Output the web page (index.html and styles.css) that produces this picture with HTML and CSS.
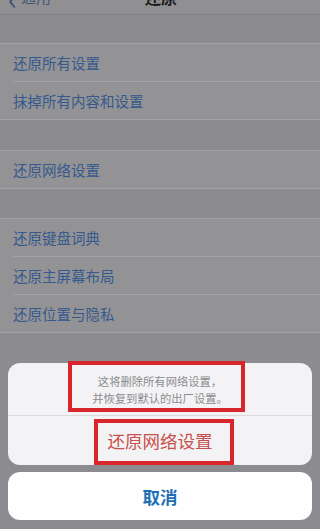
FILE: index.html
```html
<!DOCTYPE html>
<html lang="zh">
<head>
<meta charset="utf-8">
<link rel="stylesheet" href="styles.css">
</head>
<body>
<div class="screen">
  <div class="nav">
    <div class="back"><span class="chev">&#x2039;</span>通用</div>
    <div class="title">还原</div>
  </div>
  <div class="group g1">
    <div class="row">还原所有设置</div>
    <div class="row">抹掉所有内容和设置</div>
  </div>
  <div class="group g2">
    <div class="row">还原网络设置</div>
  </div>
  <div class="group g3">
    <div class="row">还原键盘词典</div>
    <div class="row">还原主屏幕布局</div>
    <div class="row">还原位置与隐私</div>
  </div>
  <div class="sheet">
    <div class="card main">
      <div class="msg">这将删除所有网络设置，<br>并恢复到默认的出厂设置。</div>
      <div class="action danger">还原网络设置</div>
      <div class="mark mark1"></div>
      <div class="mark mark2"></div>
    </div>
    <div class="card cancel">
      <div class="action cancel-text">取消</div>
    </div>
  </div>
</div>
</body>
</html>
```
FILE: styles.css
```css
* { box-sizing: border-box; margin: 0; padding: 0; }
html, body { width: 320px; height: 529px; overflow: hidden; }
body {
  background: #8c8c90;
  font-family: "Noto Sans CJK SC", "Noto Sans", sans-serif;
}
.screen {
  width: 320px;
  height: 529px;
  display: flex;
  flex-direction: column;
  position: relative;
}
.nav {
  height: 15px;
  background: #909093;
  border-bottom: 1px solid #808084;
  overflow: hidden;
  position: relative;
}
.back {
  position: absolute;
  left: 8px;
  bottom: 8px;
  font-size: 15px;
  line-height: 18px;
  color: #3e5578;
  display: flex;
  align-items: flex-end;
}
.chev { font-size: 30px; line-height: 18px; margin-right: 4px; }
.title {
  position: absolute;
  left: 145px;
  bottom: 8px;
  font-size: 16px;
  line-height: 18px;
  font-weight: 600;
  color: #1b1b1d;
}
.group {
  background: #939396;
  border-top: 1px solid #a2a2a5;
  border-bottom: 1px solid #a2a2a5;
}
.g1 { margin-top: 28px; }
.g2 { margin-top: 30px; }
.g3 { margin-top: 29px; }
.row {
  height: 38px;
  margin-left: 13px;
  display: flex;
  align-items: center;
  font-size: 14.5px;
  color: #35598c;
  border-bottom: 1px solid #a2a2a5;
  padding-bottom: 1px;
}
.row:last-child { border-bottom: none; height: 37px; }
.sheet {
  position: absolute;
  left: 8px;
  right: 8px;
  top: 363px;
  display: flex;
  flex-direction: column;
  gap: 7px;
}
.card {
  border-radius: 12px;
  position: relative;
}
.main { background: #f3f3f5; }
.cancel { background: #ffffff; }
.msg {
  height: 53px;
  display: flex;
  align-items: center;
  justify-content: center;
  text-align: center;
  font-size: 11.3px;
  line-height: 17px;
  color: #8b8b8e;
  border-bottom: 1px solid #dcdcdf;
  padding-top: 2px;
}
.action {
  display: flex;
  align-items: center;
  justify-content: center;
}
.danger {
  height: 49px;
  font-size: 17.5px;
  color: #c8504c;
}
.cancel-text {
  height: 48px;
  font-size: 17.5px;
  font-weight: 700;
  color: #1e6fb5;
}
.mark {
  position: absolute;
  border: 4px solid #d9252c;
}
.mark1 { left: 60px; top: -2px; width: 177px; height: 51px; }
.mark2 { left: 86px; top: 56px; width: 140px; height: 46px; }
```
